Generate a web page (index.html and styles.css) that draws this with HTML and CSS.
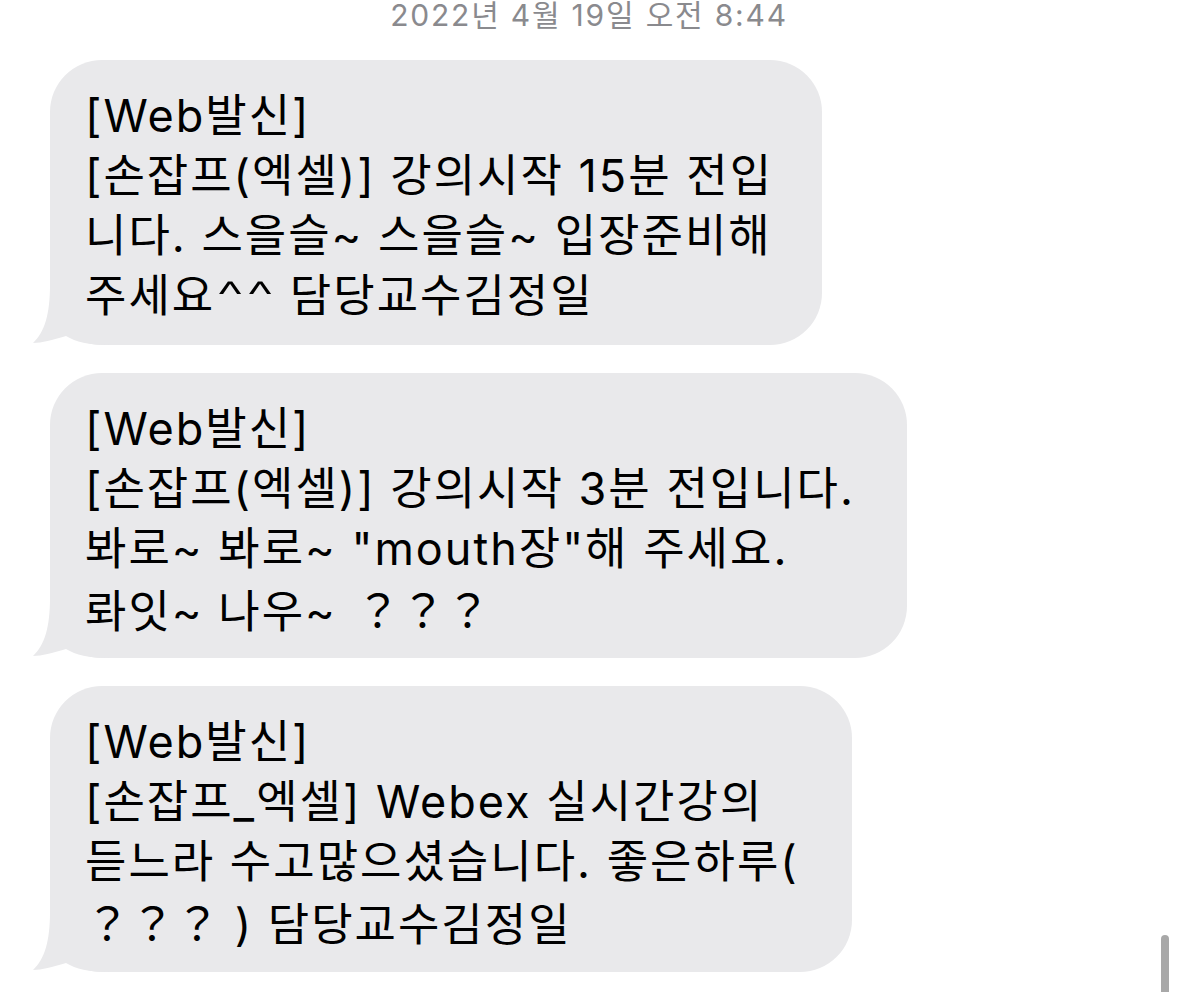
FILE: index.html
```html
<!DOCTYPE html>
<html lang="ko">
<head>
  <meta charset="UTF-8">
  <title>메시지</title>
  <link rel="stylesheet" href="styles.css">
</head>
<body>
<div class="thread">
  <div class="stamp">2022년 4월 19일 오전 8:44</div>

  <div class="bubble bubble-1">
    <svg class="tail" width="80" height="60" viewBox="0 0 80 60"><path d="M20,0 C20,28 15,47 3,58 C12,58 22,55 36,51 C46,57 58,60 80,60 L80,0 Z"/></svg>
    <p class="text">[Web발신]<br>[손잡프(엑셀)] 강의시작 15분 전입<br>니다. 스을슬~ 스을슬~ 입장준비해<br>주세요<span class="caret">^</span><span class="caret">^</span> 담당교수김정일</p>
  </div>

  <div class="bubble bubble-2">
    <svg class="tail" width="80" height="60" viewBox="0 0 80 60"><path d="M20,0 C20,28 15,47 3,58 C12,58 22,55 36,51 C46,57 58,60 80,60 L80,0 Z"/></svg>
    <p class="text">[Web발신]<br>[손잡프(엑셀)] 강의시작 3분 전입니다.<br>봐로~ 봐로~ "mouth장"해 주세요.<br>롸잇~ 나우~ <span class="q gap">？？？</span></p>
  </div>

  <div class="bubble bubble-3">
    <svg class="tail" width="80" height="60" viewBox="0 0 80 60"><path d="M20,0 C20,28 15,47 3,58 C12,58 22,55 36,51 C46,57 58,60 80,60 L80,0 Z"/></svg>
    <p class="text">[Web발신]<br>[손잡프_엑셀] Webex 실시간강의<br>듣느라 수고많으셨습니다. 좋은하루(<br><span class="q">？？？</span> ) 담당교수김정일</p>
  </div>
</div>
<div class="scrollbar"></div>
</body>
</html>
```

FILE: styles.css
```css
* {
  margin: 0;
  padding: 0;
  box-sizing: border-box;
}

html, body {
  height: 992px;
  overflow: hidden;
  background: #fff;
}

body {
  font-family: Inter, "Noto Sans CJK KR", sans-serif;
  color: #000;
}

.thread {
  display: flex;
  flex-direction: column;
  align-items: flex-start;
  gap: 28px;
  padding-left: 50px;
}

.stamp {
  align-self: stretch;
  margin-left: -50px;
  height: 30px;
  margin-bottom: 2px;
  font-size: 30px;
  line-height: 30px;
  letter-spacing: 1.8px;
  text-align: center;
  color: #8a8a8e;
}

.bubble {
  position: relative;
  height: 285px;
  padding: 26px 0 0 35px;
  background: #e9e9eb;
  border-radius: 52px;
}

.bubble-1 {
  width: 772px;
}

.bubble-2 {
  width: 857px;
}

.bubble-3 {
  width: 802px;
  height: 286px;
}

.tail {
  position: absolute;
  left: -20px;
  bottom: 0;
  fill: #e9e9eb;
}

.text {
  position: relative;
  font-size: 45px;
  line-height: 60px;
  letter-spacing: 2px;
  white-space: nowrap;
}

.caret {
  display: inline-block;
  width: 30px;
  font-weight: 300;
  letter-spacing: 0;
  text-align: center;
  transform: scale(1.35, 0.9);
}

.q {
  font-family: "Noto Sans CJK KR", sans-serif;
  letter-spacing: 0;
}

.gap {
  margin-left: 4px;
}

.scrollbar {
  position: absolute;
  left: 1161px;
  top: 935px;
  width: 8px;
  height: 80px;
  border-radius: 4px;
  background: #a8a8a8;
}
```
